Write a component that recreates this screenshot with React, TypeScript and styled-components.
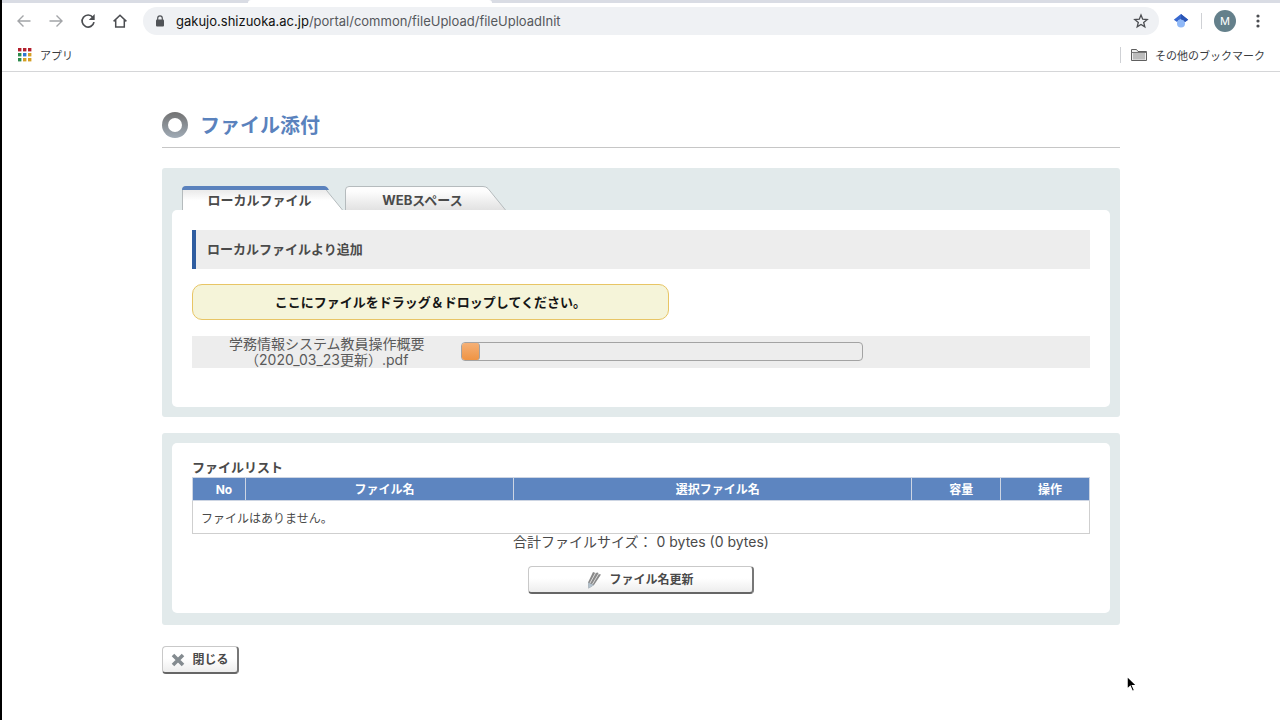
import React, { useState } from "react";
import styled, { createGlobalStyle } from "styled-components";

const GlobalStyle = createGlobalStyle`
  *, *::before, *::after { box-sizing: border-box; }
  body {
    margin: 0;
    background: #fff;
    color: #4a4a4a;
    font-family: "Inter", "Noto Sans CJK JP", sans-serif;
    font-size: 14px;
  }
  button, input { font: inherit; color: inherit; }
`;

const Screen = styled.div`
  min-height: 100vh;
  border-left: 2px solid #000;
  overflow: hidden;
`;

const TabStrip = styled.div`
  display: flex;
  height: 3px;
  background: #d9dce4;
`;

const ActiveBrowserTab = styled.div`
  width: 244px;
  margin-left: 246px;
  border-radius: 3px 3px 0 0;
  background: #fff;
`;

const Toolbar = styled.div`
  display: flex;
  align-items: center;
  height: 36px;
  padding: 0 12px 0 10px;
`;

const IconButton = styled.button<{ $muted?: boolean }>`
  display: grid;
  place-items: center;
  width: 24px;
  height: 24px;
  margin-right: 8px;
  padding: 0;
  border: 0;
  background: none;
  color: ${(p) => (p.$muted ? "#a3a5a8" : "#4b4d51")};
`;

const AddressBar = styled.label`
  display: flex;
  flex: 1;
  align-items: center;
  height: 28px;
  margin-left: 3px;
  padding: 0 10px 0 12px;
  border-radius: 14px;
  background: #eff1f4;
`;

const UrlField = styled.div`
  position: relative;
  flex: 1;
  margin-left: 11px;
  font-family: "Inter", sans-serif;
  font-size: 13px;
  line-height: 20px;
`;

const UrlText = styled.div`
  color: #55585c;
  white-space: nowrap;
  pointer-events: none;
  b { font-weight: 400; color: #111; }
`;

const UrlInput = styled.input`
  position: absolute;
  inset: 0;
  width: 100%;
  padding: 0;
  border: 0;
  outline: 0;
  background: none;
  color: transparent;
  caret-color: #111;
`;

const ToolbarEnd = styled.div`
  display: flex;
  align-items: center;
  gap: 12px;
  margin-left: 14px;
`;

const Divider = styled.span`
  width: 1px;
  height: 16px;
  background: #cfd1d5;
`;

const Avatar = styled.button`
  width: 22px;
  height: 22px;
  padding: 0;
  border: 0;
  border-radius: 50%;
  background: #64808b;
  color: #fff;
  font-size: 11px;
  line-height: 22px;
`;

const PlainIcon = styled.button`
  display: flex;
  padding: 0;
  border: 0;
  background: none;
  color: #4b4d51;
`;

const Bookmarks = styled.nav`
  display: flex;
  align-items: center;
  justify-content: space-between;
  height: 33px;
  padding: 0 15px 1px;
  border-bottom: 1px solid #d5d6d8;
  font-size: 11px;
`;

const BookmarkLink = styled.a`
  display: flex;
  align-items: center;
  gap: 8px;
  color: #3a3c3f;
  text-decoration: none;
`;

const OtherBookmarks = styled.div`
  display: flex;
  align-items: center;
  gap: 10px;
`;

const Main = styled.main`
  padding: 40px 160px;
`;

const PageHeader = styled.header`
  display: flex;
  align-items: center;
  gap: 12px;
  height: 36px;
  margin-bottom: 20px;
  padding-bottom: 10px;
  border-bottom: 1px solid #c6c6c6;
`;

const PageTitle = styled.h1`
  margin: 0;
  padding-top: 2px;
  color: #5a82bd;
  font-size: 20px;
  line-height: 26px;
`;

const Ring = styled.span`
  display: grid;
  place-items: center;
  width: 26px;
  height: 26px;
  border-radius: 50%;
  background: linear-gradient(#727272, #a0abb6);
  &::after {
    content: "";
    width: 14px;
    height: 14px;
    border-radius: 50%;
    background: #fff;
  }
`;

const Panel = styled.section`
  margin-bottom: 16px;
  padding: 10px 10px 12px;
  border-radius: 3px;
  background: #e2eaeb;
`;

const TabPanel = styled(Panel)`
  padding: 18px 10px 10px;
`;

const Sheet = styled.div`
  padding: 20px;
  border-radius: 5px;
  background: #fff;
`;

const Tabs = styled.div`
  display: flex;
  gap: 2px;
  margin-left: 10px;
`;

const TabButton = styled.button`
  position: relative;
  width: 161px;
  height: 24px;
  padding: 3px 6px 0 0;
  border: 0;
  background: none;
  font-weight: 700;
  font-size: 13px;
  line-height: 22px;
  isolation: isolate;
`;

const TabShape = styled.svg`
  position: absolute;
  inset: 0;
  z-index: -1;
`;

const SectionTitle = styled.h2`
  margin: 0 0 15px;
  padding: 0 11px;
  border-left: 4px solid #2f5da0;
  background: #ededed;
  font-size: 13px;
  line-height: 39px;
`;

const DropZone = styled.div`
  width: 53.1%;
  margin-bottom: 16px;
  border: 1px solid #e8c565;
  border-radius: 10px;
  background: #f5f4d9;
  color: #161616;
  font-weight: 700;
  font-size: 13px;
  line-height: 34px;
  text-align: center;
`;

const UploadRow = styled.div`
  display: flex;
  align-items: center;
  height: 32px;
  margin-bottom: 19px;
  background: #ededed;
`;

const FileName = styled.div`
  width: 30%;
  color: #5a5a5a;
  font-size: 14px;
  line-height: 16px;
  text-align: center;
`;

const ProgressTrack = styled.div`
  width: 402px;
  height: 19px;
  margin-bottom: 2px;
  border: 1px solid #a3a3a3;
  border-radius: 4px;
`;

const ProgressFill = styled.div`
  height: 17px;
  border-right: 1px solid #a3a3a3;
  border-radius: 3px;
  background: linear-gradient(#f5b076, #ef9443);
`;

const FileTable = styled.table`
  width: 100%;
  border-collapse: collapse;
  table-layout: fixed;
  font-size: 12px;
  caption {
    font-weight: 700;
    font-size: 13px;
    line-height: 20px;
    text-align: left;
  }
  th {
    height: 23px;
    padding: 2px 0 0 10px;
    border: 1px solid #cdd5e3;
    background: #5d85c0;
    color: #fff;
    line-height: 18px;
  }
  td {
    height: 33px;
    padding: 0 8px;
    border: 1px solid #cfcfcf;
  }
`;

const Col = styled.col<{ $share: number }>`
  width: ${(p) => p.$share}%;
`;

const ListSheet = styled(Sheet)`
  padding: 14px 20px 19px;
`;

const TotalSize = styled.p`
  margin: 0 0 16px;
  font-size: 14px;
  line-height: 16px;
  text-align: center;
`;

const RaisedButton = styled.button<{ $wide?: boolean }>`
  display: flex;
  align-items: center;
  justify-content: center;
  gap: 7px;
  width: ${(p) => (p.$wide ? "226px" : "77px")};
  height: 28px;
  margin: ${(p) => (p.$wide ? "0 auto" : "21px 0 0")};
  padding: 0;
  border: 1px solid #c9c9c9;
  border-right: 2px solid #777;
  border-bottom: 2px solid #666;
  border-radius: 4px;
  background: linear-gradient(#fff 45%, #ededed);
  font-weight: 700;
  font-size: 12px;
  line-height: 16px;
`;

const Pointer = styled.svg`
  position: fixed;
  left: 1125px;
  top: 674px;
  pointer-events: none;
`;

const stroke = { fill: "none", stroke: "currentColor" } as const;

const Arrow = ({ right }: { right?: boolean }) => (
  <svg width="16" height="16" viewBox="0 0 16 16" {...stroke} strokeWidth="1.4">
    <path d={right ? "M1.5 8H14M8.5 2.5 14 8l-5.5 5.5" : "M14.5 8H2M7.5 2.5 2 8l5.5 5.5"} />
  </svg>
);

const swatches = ["#b3202d", "#b3202d", "#b3202d", "#2c8a4b", "#2d75d0", "#d59f24", "#2c8a4b", "#d59f24", "#d59f24"];

const tabs = ["ローカルファイル", "WEBスペース"];

export default function App() {
  const [tab, setTab] = useState(0);
  const [url, setUrl] = useState("gakujo.shizuoka.ac.jp/portal/common/fileUpload/fileUploadInit");
  const slash = url.indexOf("/") < 0 ? url.length : url.indexOf("/");

  return (
    <Screen>
      <GlobalStyle />
      <TabStrip><ActiveBrowserTab /></TabStrip>
      <Toolbar>
        <IconButton $muted aria-label="戻る"><Arrow /></IconButton>
        <IconButton $muted aria-label="進む"><Arrow right /></IconButton>
        <IconButton aria-label="再読み込み">
          <svg width="16" height="16" viewBox="0 0 16 16" {...stroke} strokeWidth="1.7">
            <path d="M12.9 4.4A6 6 0 1 0 14 9.2" />
            <path d="M14.7 1v6H8.8z" fill="currentColor" stroke="none" />
          </svg>
        </IconButton>
        <IconButton aria-label="ホーム">
          <svg width="16" height="16" viewBox="0 0 16 16" {...stroke} strokeWidth="1.5">
            <path d="M1.6 8.4 8 2.2l6.4 6.2M3.7 7v7h8.6V7" />
          </svg>
        </IconButton>
        <AddressBar>
          <svg width="10" height="12" viewBox="0 0 10 12" fill="#505357">
            <rect x="1" y="4.5" width="8" height="7" rx="1" />
            <path d="M2.7 5V3.2a2.3 2.3 0 0 1 4.6 0V5" fill="none" stroke="#505357" strokeWidth="1.2" />
          </svg>
          <UrlField>
            <UrlText aria-hidden="true"><b>{url.slice(0, slash)}</b>{url.slice(slash)}</UrlText>
            <UrlInput aria-label="アドレス" value={url} onChange={(e) => setUrl(e.target.value)} />
          </UrlField>
          <PlainIcon type="button" aria-label="ブックマークに追加">
            <svg width="16" height="16" viewBox="0 0 16 16" {...stroke} strokeWidth="1.3">
              <path d="m8 2 1.700 4.200 4.500.3-3.500 2.900 1.100 4.400L8 11.400l-3.800 2.400 1.100-4.400L1.800 6.500l4.500-.3z" />
            </svg>
          </PlainIcon>
        </AddressBar>
        <ToolbarEnd>
          <PlainIcon aria-label="Scholar">
            <svg width="16" height="16" viewBox="0 0 16 16">
              <circle cx="8" cy="10.500" r="4" fill="#8fb8f7" />
              <path d="M8 1 .8 6.800 4 9a4.300 4.300 0 0 1 8 0l3.200-2.200z" fill="#3868cf" />
              <path d="M8 1l7.200 5.800L12 9a4.300 4.300 0 0 0-4-2.500z" fill="#2a55b5" />
            </svg>
          </PlainIcon>
          <Divider />
          <Avatar aria-label="アカウント">M</Avatar>
          <PlainIcon aria-label="メニュー">
            <svg width="20" height="16" viewBox="0 0 20 16" fill="#4b4d51">
              <circle cx="10" cy="3" r="1.600" /><circle cx="10" cy="8" r="1.600" /><circle cx="10" cy="13" r="1.600" />
            </svg>
          </PlainIcon>
        </ToolbarEnd>
      </Toolbar>
      <Bookmarks>
        <BookmarkLink href="#apps">
          <svg width="15" height="15" viewBox="0 0 15 15">
            {swatches.map((c, i) => (
              <rect key={i} x={(i % 3) * 5 + 1} y={Math.floor(i / 3) * 5 + 1} width="3.400" height="3.400" fill={c} />
            ))}
          </svg>
          アプリ
        </BookmarkLink>
        <OtherBookmarks>
          <Divider />
          <BookmarkLink href="#bookmarks">
            <svg width="16" height="14" viewBox="0 0 16 14">
              <path d="M.5 12.500V1.500h5l1.500 2h8.500v9z" fill="#eee" stroke="#5f5f5f" />
              <path d="M2 5h12v6.500H2z" fill="#bcbcbc" />
              <path d="M.5 4.500h15" stroke="#777" />
            </svg>
            その他のブックマーク
          </BookmarkLink>
        </OtherBookmarks>
      </Bookmarks>

      <Main>
        <PageHeader>
          <Ring />
          <PageTitle>ファイル添付</PageTitle>
        </PageHeader>

        <TabPanel>
          <Tabs role="tablist">
            {tabs.map((name, i) => (
              <TabButton key={name} role="tab" aria-selected={tab === i} onClick={() => setTab(i)}>
                <TabShape width="161" height="24" viewBox="0 0 161 24" aria-hidden="true">
                  <defs>
                    <linearGradient id={`tab-fill-${i}`} x1="0" y1="0" x2="0" y2="1">
                      <stop offset="0.2" stopColor={tab === i ? "#ececec" : "#fdfdfd"} />
                      <stop offset={tab === i ? "0.6" : "1"} stopColor={tab === i ? "#fff" : "#e2e2e2"} />
                    </linearGradient>
                  </defs>
                  <path d="M.5 24V4Q.5.5 4 .5H138Q141 .5 143 2.500L160.500 24" fill={`url(#tab-fill-${i})`} stroke="#b5bbbd" />
                  {tab === i && <path d="M0 4Q0 0 4 0H142Q145 0 147 4z" fill="#5a82bd" />}
                </TabShape>
                {name}
              </TabButton>
            ))}
          </Tabs>
          <Sheet>
            <SectionTitle>ローカルファイルより追加</SectionTitle>
            <DropZone>ここにファイルをドラッグ＆ドロップしてください。</DropZone>
            <UploadRow>
              <FileName>学務情報システム教員操作概要<br />（2020_03_23更新）.pdf</FileName>
              <ProgressTrack role="progressbar" aria-label="アップロード" aria-valuenow={4}>
                <ProgressFill style={{ width: "4.5%" }} />
              </ProgressTrack>
            </UploadRow>
          </Sheet>
        </TabPanel>

        <Panel>
          <ListSheet>
            <FileTable>
              <caption>ファイルリスト</caption>
              <colgroup>
                <Col $share={5.9} /><Col $share={29.9} /><Col $share={44.4} /><Col $share={9.9} /><Col $share={9.9} />
              </colgroup>
              <thead>
                <tr><th>No</th><th>ファイル名</th><th>選択ファイル名</th><th>容量</th><th>操作</th></tr>
              </thead>
              <tbody>
                <tr><td colSpan={5}>ファイルはありません。</td></tr>
              </tbody>
            </FileTable>
            <TotalSize>合計ファイルサイズ： 0 bytes (0 bytes)</TotalSize>
            <RaisedButton $wide>
              <svg width="15" height="18" viewBox="0 0 15 18">
                <path d="M6 1 1 11.500 1.500 17.500 7 14 14 3.500 11.500 3 11 1.500 8.500 2z" fill="#8a8a8a" />
                <path d="M8.500 2 3 12M11.500 3 5.500 13" stroke="#dedede" />
                <path d="m1 11.500 6 2.500-5.500 3.500z" fill="#b3c1cc" />
              </svg>
              ファイル名更新
            </RaisedButton>
          </ListSheet>
        </Panel>

        <RaisedButton>
          <svg width="14" height="14" viewBox="0 0 14 14" stroke="#848b90" strokeWidth="3.600">
            <path d="m2 2 10 10M12 2 2 12" />
          </svg>
          閉じる
        </RaisedButton>
      </Main>
      <Pointer width="14" height="20" viewBox="0 0 14 20" aria-hidden="true">
        <path d="M2 2v13.500l3.200-3 2.100 5 2.400-1-2.100-4.800H12z" stroke="#fff" strokeWidth="1.500" />
      </Pointer>
    </Screen>
  );
}
